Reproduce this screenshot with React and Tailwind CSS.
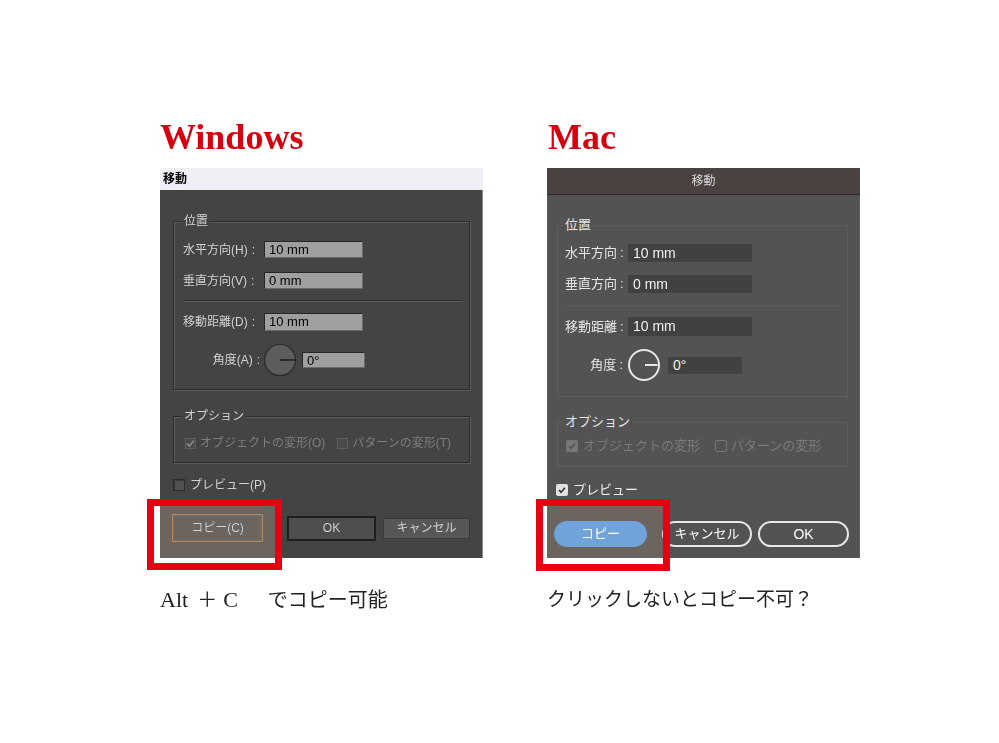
const UI = "font-['Liberation_Sans','Noto_Sans_CJK_JP',sans-serif]";
const SERIF = "font-['Liberation_Serif','Noto_Sans_CJK_JP',serif]";

function WinGroup({ label, className, children }) {
  return (
    <div className={`relative border border-[#2b2b2b] shadow-[1px_1px_0_#5c5c5c,inset_1px_1px_0_#5c5c5c] ${className}`}>
      <span className="absolute left-[8px] top-[-9px] px-[2px] bg-[#444444] text-[12px] leading-[16px] text-[#d2d2d2]">
        {label}
      </span>
      {children}
    </div>
  );
}

function WinInput({ value, className }) {
  return (
    <div className={`bg-[#9f9f9f] border-t border-l border-[#262626] border-b border-r border-b-[#6a6a6a] border-r-[#6a6a6a] text-[13px] leading-[15px] text-black pl-[4px] ${className}`}>
      {value}
    </div>
  );
}

function WinLabel({ children, className }) {
  return (
    <span className={`whitespace-nowrap text-[12px] text-[#d2d2d2] ${className}`}>
      {children}
      <span className="ml-[4px]">:</span>
    </span>
  );
}

function WinRow({ label, value, className, h }) {
  return (
    <div className={`flex items-center ${h} ${className}`}>
      <WinLabel className="w-[81px]">{label}</WinLabel>
      <WinInput value={value} className={`w-[99px] ${h}`} />
    </div>
  );
}

function WindowsDialog() {
  return (
    <div className={`w-[323px] ${UI}`}>
      <div className="h-[22px] bg-[#eef0f6] flex items-center pl-[3px] text-[12px] font-bold text-black">移動</div>
      <div className="h-[368px] bg-[#444444] border-r border-[#8a8a8a] pl-[13px] flex flex-col">
        <WinGroup label="位置" className="mt-[31px] w-[297px] h-[169px] shrink-0 pl-[9px] pt-[19px] flex flex-col">
          <WinRow label="水平方向(H)" value="10 mm" h="h-[17px]" />
          <WinRow label="垂直方向(V)" value="0 mm" h="h-[17px]" className="mt-[14px]" />
          <div className="mt-[11px] w-[279px] h-[2px] border-t border-[#2b2b2b] border-b border-b-[#5a5a5a]" />
          <WinRow label="移動距離(D)" value="10 mm" h="h-[18px]" className="mt-[11px]" />
          <div className="flex items-center h-[34px] mt-[12px]">
            <div className="w-[81px] pr-[4px] flex justify-end">
              <WinLabel>角度(A)</WinLabel>
            </div>
            <svg width="34" height="34" viewBox="0 0 34 34" className="ml-[-1px]">
              <circle cx="17" cy="17" r="15.5" fill="#5d5d5d" stroke="#2a2a2a" strokeWidth="1.2" />
              <line x1="17" y1="17" x2="32.5" y2="17" stroke="#1c1c1c" strokeWidth="1.5" />
            </svg>
            <WinInput value="0°" className="ml-[5px] w-[63px] h-[16px]" />
          </div>
        </WinGroup>
        <WinGroup label="オプション" className="mt-[26px] w-[297px] h-[47px] shrink-0 pl-[11px] pt-[18px]">
          <div className="flex items-center h-[16px] text-[12px] text-[#7e7e7e] whitespace-nowrap">
            <svg width="11" height="11" viewBox="0 0 11 11">
              <rect x="0.5" y="0.5" width="10" height="10" fill="#4a4a4a" stroke="#5e5e5e" />
              <path d="M2 5.5 L4.5 8 L9 2.5" fill="none" stroke="#8a8a8a" strokeWidth="1.6" />
            </svg>
            <span className="ml-[4px]">オブジェクトの変形(O)</span>
            <span className="ml-[12px] w-[11px] h-[11px] border border-[#5e5e5e] bg-[#4a4a4a]" />
            <span className="ml-[4px]">パターンの変形(T)</span>
          </div>
        </WinGroup>
        <div className="mt-[15px] h-[14px] flex items-center">
          <span className="w-[12px] h-[12px] border border-[#2a2a2a] bg-[#505050] shadow-[inset_1px_1px_0_#3a3a3a]" />
          <span className="ml-[5px] text-[12px] text-[#d2d2d2]">プレビュー(P)</span>
        </div>
        <div className="mt-[22px] h-[28px] flex items-center">
          <div className="ml-[-1px] w-[91px] h-[28px] border border-[#b8895c] bg-[#5c5a58] shadow-[inset_0_0_0_2px_#6e6b68] flex items-center justify-center text-[12px] text-[#d2d2d2]">
            コピー(C)
          </div>
          <div className="ml-[24px] w-[89px] h-[25px] border-2 border-[#1e1e1e] bg-[#4e4e4e] flex items-center justify-center text-[12px] text-[#cfcfcf]">
            OK
          </div>
          <div className="ml-[7px] w-[87px] h-[21px] border border-[#3a3a3a] bg-[#575757] flex items-center justify-center text-[12px] text-[#d2d2d2]">
            キャンセル
          </div>
        </div>
      </div>
    </div>
  );
}

function MacGroup({ label, className, children }) {
  return (
    <div className={`relative border border-[#5d5d5d] ${className}`}>
      <span className="absolute left-[5px] top-[-10px] px-[2px] bg-[#535353] text-[13px] leading-[18px] text-[#e6e6e6]">
        {label}
      </span>
      {children}
    </div>
  );
}

function MacInput({ value, className }) {
  return (
    <div className={`bg-[#414141] text-[14px] text-[#f2f2f2] pl-[5px] flex items-center ${className}`}>{value}</div>
  );
}

function MacLabel({ children, className }) {
  return (
    <span className={`whitespace-nowrap text-[13px] text-[#e6e6e6] ${className}`}>
      {children}
      <span className="ml-[3px]">:</span>
    </span>
  );
}

function MacRow({ label, value, className, h }) {
  return (
    <div className={`flex items-center ${h} ${className}`}>
      <MacLabel className="w-[63px]">{label}</MacLabel>
      <MacInput value={value} className={`w-[124px] ${h}`} />
    </div>
  );
}

function MacDialog() {
  return (
    <div className={`w-[313px] ${UI}`}>
      <div className="h-[27px] bg-[#4a4240] border-b border-[#2e2826] flex items-center justify-center text-[12px] text-[#dcdcdc]">
        移動
      </div>
      <div className="h-[363px] bg-[#535353] border-x border-[#5e5e5e] pl-[9px] flex flex-col">
        <MacGroup label="位置" className="mt-[30px] w-[291px] h-[172px] shrink-0 pl-[7px] pt-[18px] flex flex-col">
          <MacRow label="水平方向" value="10 mm" h="h-[18px]" />
          <MacRow label="垂直方向" value="0 mm" h="h-[18px]" className="mt-[13px]" />
          <div className="mt-[12px] w-[275px] h-px bg-[#5d5d5d]" />
          <MacRow label="移動距離" value="10 mm" h="h-[19px]" className="mt-[11px]" />
          <div className="flex items-center h-[34px] mt-[12px]">
            <div className="w-[62px] pr-[4px] flex justify-end">
              <MacLabel>角度</MacLabel>
            </div>
            <svg width="34" height="34" viewBox="0 0 34 34">
              <circle cx="17" cy="17" r="15" fill="none" stroke="#e8e8e8" strokeWidth="2" />
              <line x1="18" y1="17" x2="30.5" y2="17" stroke="#e8e8e8" strokeWidth="2" />
            </svg>
            <MacInput value="0°" className="ml-[7px] w-[74px] h-[17px]" />
          </div>
        </MacGroup>
        <MacGroup label="オプション" className="mt-[25px] w-[291px] h-[45px] shrink-0 pl-[8px] pt-[15px]">
          <div className="flex items-center h-[16px] text-[13px] text-[#7b7b7b] whitespace-nowrap">
            <span className="w-[12px] h-[12px] rounded-[2px] bg-[#767676] flex items-center justify-center">
              <svg width="10" height="10" viewBox="0 0 10 10">
                <path d="M2 5 L4 7.2 L8 2.8" fill="none" stroke="#545454" strokeWidth="1.6" />
              </svg>
            </span>
            <span className="ml-[5px]">オブジェクトの変形</span>
            <span className="ml-[15px] w-[12px] h-[12px] rounded-[2px] border border-[#787878]" />
            <span className="ml-[4px]">パターンの変形</span>
          </div>
        </MacGroup>
        <div className="mt-[16px] h-[14px] flex items-center">
          <span className="ml-[-1px] w-[12px] h-[12px] rounded-[2px] bg-[#e2e2e2] flex items-center justify-center">
            <svg width="10" height="10" viewBox="0 0 10 10">
              <path d="M2 5 L4 7.2 L8 2.8" fill="none" stroke="#333333" strokeWidth="1.6" />
            </svg>
          </span>
          <span className="ml-[5px] text-[13px] text-[#f0f0f0]">プレビュー</span>
        </div>
        <div className="mt-[24px] h-[26px] flex items-center">
          <div className="ml-[-3px] w-[93px] h-[26px] rounded-full bg-[#6fa3d9] flex items-center justify-center text-[13px] text-white">
            コピー
          </div>
          <div className="ml-[15px] w-[90px] h-[26px] rounded-full border-2 border-[#e8e8e8] flex items-center justify-center text-[13px] text-white">
            キャンセル
          </div>
          <div className="ml-[6px] w-[91px] h-[26px] rounded-full border-2 border-[#e8e8e8] flex items-center justify-center text-[14px] text-white">
            OK
          </div>
        </div>
      </div>
    </div>
  );
}

export default function App() {
  return (
    <div className="w-[999px] h-[743px] bg-white flex pl-[160px] pt-[118px] gap-[64px]">
      <div className="relative w-[323px] shrink-0">
        <h2 className={`h-[50px] text-[36px] leading-[38px] font-bold text-[#d7000f] ${SERIF}`}>Windows</h2>
        <WindowsDialog />
        <p className={`mt-[30px] h-[24px] flex items-center text-[20px] leading-[24px] text-[#222222] whitespace-nowrap ${SERIF}`}>
          <span className="text-[22px]">Alt</span>
          <span className="ml-[9px]">＋</span>
          <span className="ml-[6px] text-[22px]">C</span>
          <span className="ml-[30px]">でコピー可能</span>
        </p>
        <div className="absolute left-[-6px] top-[388px] w-[121px] h-[57px] bg-[#6b645f] mix-blend-lighten" />
        <div className="absolute left-[-13px] top-[381px] w-[135px] h-[71px] border-[7px] border-[#e60012]" />
      </div>
      <div className="relative w-[313px] shrink-0">
        <h2 className={`h-[50px] pl-[1px] text-[36px] leading-[38px] font-bold text-[#d7000f] ${SERIF}`}>Mac</h2>
        <MacDialog />
        <p className={`mt-[30px] text-[19px] leading-[24px] text-[#222222] whitespace-nowrap ${SERIF}`}>クリックしないとコピー不可？</p>
        <div className="absolute left-[-4px] top-[388px] w-[120px] h-[58px] bg-[#6b645f] mix-blend-lighten" />
        <div className="absolute left-[-11px] top-[381px] w-[134px] h-[72px] border-[7px] border-[#e60012]" />
      </div>
    </div>
  );
}
